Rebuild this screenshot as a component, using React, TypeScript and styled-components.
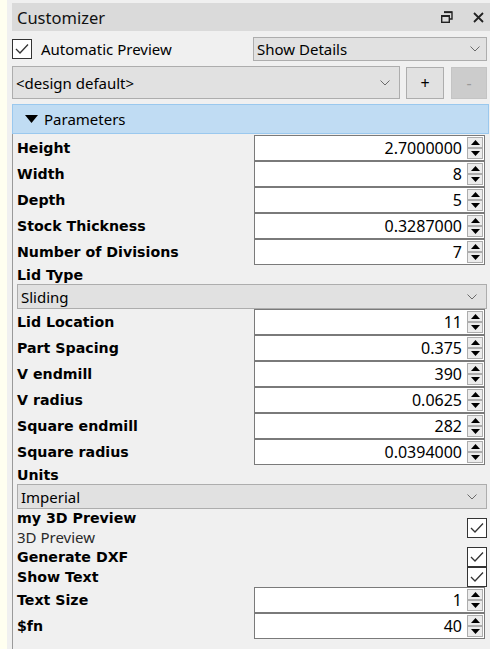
import React from "react";
import styled, { createGlobalStyle } from "styled-components";

const GlobalStyle = createGlobalStyle`
  html, body { margin: 0; padding: 0; background: #f0f0f0; }
  body { width: 490px; height: 649px; overflow: hidden; font-family: "Noto Sans", "Open Sans", sans-serif; color: #000; }
`;

const Page = styled.div`
  display: flex;
  width: 490px;
  height: 649px;
  background: #f0f0f0;
`;

const EdgeStrip = styled.div`
  width: 7px;
  flex-shrink: 0;
  background: #fffff0;
`;

const Dock = styled.div`
  flex: 1;
  display: flex;
  flex-direction: column;
  padding-left: 5px;
  padding-top: 3px;
  min-width: 0;
`;

const TitleBar = styled.div`
  height: 28px;
  background: #dadada;
  display: flex;
  align-items: center;
  padding: 0 6px 0 5px;
  font-size: 16.5px;
  color: #111;
`;

const TitleText = styled.span`
  flex: 1;
`;

const TitleButtons = styled.div`
  display: flex;
  align-items: center;
  gap: 20px;
`;

const TopRow = styled.div`
  margin-top: 6px;
  height: 24px;
  display: grid;
  grid-template-columns: 1fr 234px;
  align-items: center;
  padding-right: 3px;
`;

const CheckLabel = styled.label`
  display: flex;
  align-items: center;
  gap: 9px;
  font-size: 15px;
`;

const Box = styled.span`
  width: 20px;
  height: 20px;
  box-sizing: border-box;
  border: 1px solid #333;
  background: #fff;
  display: inline-flex;
  align-items: center;
  justify-content: center;
  flex-shrink: 0;
`;

const Select = styled.div<{ $h: number; $chevGap?: number }>`
  height: ${(p) => p.$h}px;
  box-sizing: border-box;
  background: #e1e1e1;
  border: 1px solid #adadad;
  display: flex;
  align-items: center;
  padding: 0 ${(p) => p.$chevGap ?? 8}px 0 3px;
  font-size: 15px;
  color: #000;
  min-width: 0;
`;

const SelectText = styled.span`
  flex: 1;
`;

const PresetRow = styled.div`
  margin-top: 5px;
  height: 33px;
  display: flex;
  align-items: center;
  gap: 6px;
  padding-right: 3px;
`;

const PresetSelect = styled(Select)`
  flex: 1;
`;

const PresetButton = styled.div<{ $disabled?: boolean; $w: number }>`
  width: ${(p) => p.$w}px;
  height: 32px;
  box-sizing: border-box;
  background: ${(p) => (p.$disabled ? "#cccccc" : "#e1e1e1")};
  border: 1px solid ${(p) => (p.$disabled ? "#c4c4c4" : "#adadad")};
  color: ${(p) => (p.$disabled ? "#9a9a9a" : "#000")};
  display: flex;
  align-items: center;
  justify-content: center;
  font-size: 16px;
  margin-left: ${(p) => (p.$disabled ? "1px" : "0")};
`;

const SectionHeader = styled.div`
  margin-top: 5px;
  margin-right: 1px;
  height: 30px;
  box-sizing: border-box;
  background: #c0dcf3;
  border: 1px solid #9ac8ee;
  display: flex;
  align-items: center;
  gap: 6px;
  padding-left: 12px;
  font-size: 15px;
`;

const Body = styled.div`
  flex: 1;
  border-left: 1px solid #9a9a9a;
  padding: 1px 0 0 4px;
  display: flex;
  flex-direction: column;
`;

const ParamRow = styled.div`
  height: 26px;
  display: grid;
  grid-template-columns: 1fr 231px;
  align-items: center;
  padding-right: 5px;
`;

const BoldLabel = styled.span`
  font-family: "DejaVu Sans", sans-serif;
  font-weight: bold;
  font-size: 14.2px;
  line-height: 19px;
  color: #000;
  white-space: nowrap;
`;

const GroupLabel = styled(BoldLabel)`
  display: block;
  height: 19px;
  line-height: 20px;
`;

const FullSelectWrap = styled.div`
  padding-right: 3px;
`;

const SpinBox = styled.div`
  height: 26px;
  box-sizing: border-box;
  border: 1px solid #7a7a7a;
  background: #fff;
  display: flex;
  align-items: center;
  padding-right: 1px;
`;

const SpinValue = styled.span`
  flex: 1;
  text-align: right;
  font-size: 16px;
  padding-right: 5px;
  line-height: 24px;
`;

const SpinButtons = styled.div`
  display: flex;
  flex-direction: column;
  width: 16px;
`;

const SpinBtn = styled.div`
  height: 11px;
  box-sizing: border-box;
  border: 1px solid #adadad;
  background: #ececec;
  display: flex;
  align-items: center;
  justify-content: center;
`;

const CheckRow = styled.div<{ $h: number }>`
  height: ${(p) => p.$h}px;
  display: flex;
  align-items: center;
  padding-right: 3px;
`;

const CheckText = styled.div`
  flex: 1;
  display: flex;
  flex-direction: column;
`;

const Desc = styled.span`
  font-size: 15px;
  line-height: 19px;
  color: #2a2a2a;
`;

const Chevron = ({ w = 10 }: { w?: number }) => (
  <svg width={w} height="6" viewBox="0 0 10 6">
    <polyline points="0.5,0.5 5,5 9.5,0.5" fill="none" stroke="#6a6a6a" strokeWidth="1" />
  </svg>
);

const CheckMark = () => (
  <svg width="14" height="12" viewBox="0 0 14 12">
    <polyline points="1,6 5,10 13,1.5" fill="none" stroke="#333" strokeWidth="1.3" />
  </svg>
);

const RestoreIcon = () => (
  <svg width="12" height="12" viewBox="0 0 12 12">
    <path d="M3 1 H11 V8 H9" fill="none" stroke="#222" strokeWidth="1.4" />
    <rect x="3" y="0.5" width="8" height="1.6" fill="#222" />
    <rect x="0.7" y="4.7" width="7.6" height="6.6" fill="none" stroke="#222" strokeWidth="1.4" />
    <rect x="0.5" y="4" width="8" height="2" fill="#222" />
  </svg>
);

const CloseIcon = () => (
  <svg width="11" height="11" viewBox="0 0 11 11">
    <path d="M1 1 L10 10 M10 1 L1 10" stroke="#222" strokeWidth="1.8" />
  </svg>
);

const Tri = ({ up }: { up?: boolean }) => (
  <svg width="9" height="5" viewBox="0 0 9 5">
    <polygon points={up ? "0,5 9,5 4.5,0" : "0,0 9,0 4.5,5"} fill="#000" />
  </svg>
);

const Spin = ({ value }: { value: string }) => (
  <SpinBox>
    <SpinValue>{value}</SpinValue>
    <SpinButtons>
      <SpinBtn>
        <Tri up />
      </SpinBtn>
      <SpinBtn>
        <Tri />
      </SpinBtn>
    </SpinButtons>
  </SpinBox>
);

const Param = ({ label, value }: { label: string; value: string }) => (
  <ParamRow>
    <BoldLabel>{label}</BoldLabel>
    <Spin value={value} />
  </ParamRow>
);

const FullSelect = ({ text }: { text: string }) => (
  <FullSelectWrap>
    <Select $h={25} $chevGap={9}>
      <SelectText>{text}</SelectText>
      <Chevron />
    </Select>
  </FullSelectWrap>
);

export default function App() {
  return (
    <>
      <GlobalStyle />
      <Page>
        <EdgeStrip />
        <Dock>
          <TitleBar>
            <TitleText>Customizer</TitleText>
            <TitleButtons>
              <RestoreIcon />
              <CloseIcon />
            </TitleButtons>
          </TitleBar>
          <TopRow>
            <CheckLabel>
              <Box>
                <CheckMark />
              </Box>
              Automatic Preview
            </CheckLabel>
            <Select $h={24} $chevGap={6}>
              <SelectText>Show Details</SelectText>
              <Chevron />
            </Select>
          </TopRow>
          <PresetRow>
            <PresetSelect $h={33} $chevGap={9}>
              <SelectText>&lt;design default&gt;</SelectText>
              <Chevron />
            </PresetSelect>
            <PresetButton $w={38}>+</PresetButton>
            <PresetButton $w={36} $disabled>
              -
            </PresetButton>
          </PresetRow>
          <SectionHeader>
            <svg width="13" height="8" viewBox="0 0 13 8">
              <polygon points="0,0 13,0 6.5,8" fill="#000" />
            </svg>
            Parameters
          </SectionHeader>
          <Body>
            <Param label="Height" value="2.7000000" />
            <Param label="Width" value="8" />
            <Param label="Depth" value="5" />
            <Param label="Stock Thickness" value="0.3287000" />
            <Param label="Number of Divisions" value="7" />
            <GroupLabel>Lid Type</GroupLabel>
            <FullSelect text="Sliding" />
            <Param label="Lid Location" value="11" />
            <Param label="Part Spacing" value="0.375" />
            <Param label="V endmill" value="390" />
            <Param label="V radius" value="0.0625" />
            <Param label="Square endmill" value="282" />
            <Param label="Square radius" value="0.0394000" />
            <GroupLabel>Units</GroupLabel>
            <FullSelect text="Imperial" />
            <CheckRow $h={38}>
              <CheckText>
                <BoldLabel>my 3D Preview</BoldLabel>
                <Desc>3D Preview</Desc>
              </CheckText>
              <Box>
                <CheckMark />
              </Box>
            </CheckRow>
            <CheckRow $h={20}>
              <CheckText>
                <BoldLabel>Generate DXF</BoldLabel>
              </CheckText>
              <Box>
                <CheckMark />
              </Box>
            </CheckRow>
            <CheckRow $h={20}>
              <CheckText>
                <BoldLabel>Show Text</BoldLabel>
              </CheckText>
              <Box>
                <CheckMark />
              </Box>
            </CheckRow>
            <Param label="Text Size" value="1" />
            <Param label="$fn" value="40" />
          </Body>
        </Dock>
      </Page>
    </>
  );
}
